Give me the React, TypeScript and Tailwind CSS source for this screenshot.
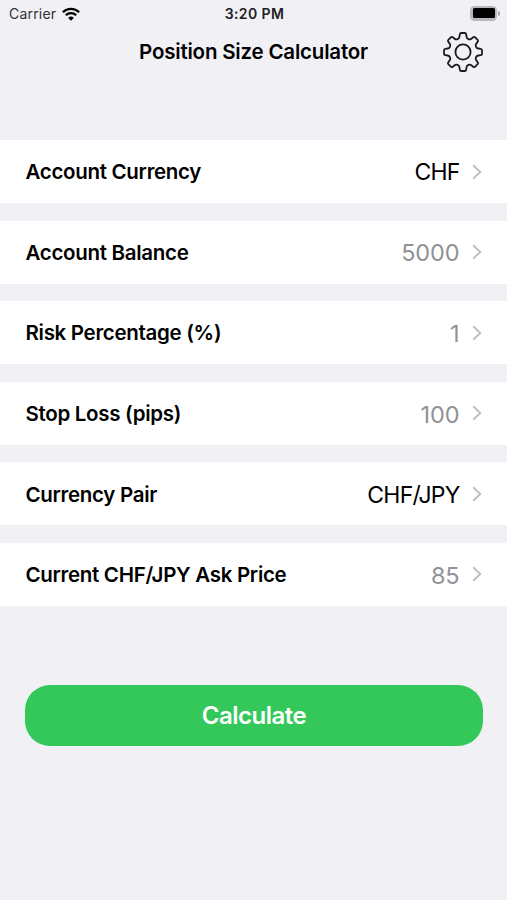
import React from "react";

type Field = { label: string; value: string; muted: boolean };

const fields: Field[] = [
  { label: "Account Currency", value: "CHF", muted: false },
  { label: "Account Balance", value: "5000", muted: true },
  { label: "Risk Percentage (%)", value: "1", muted: true },
  { label: "Stop Loss (pips)", value: "100", muted: true },
  { label: "Currency Pair", value: "CHF/JPY", muted: false },
  { label: "Current CHF/JPY Ask Price", value: "85", muted: true },
];

// Outline of one gear tooth and the valley after it; the gear repeats it eight times.
function gearPath() {
  let d = "";
  for (let i = 0; i < 8; i++) {
    const a = (i * Math.PI) / 4;
    const p = (x: number, y: number) =>
      `${(21 + x * Math.cos(a) - y * Math.sin(a)).toFixed(2)} ${(21 + x * Math.sin(a) + y * Math.cos(a)).toFixed(2)}`;
    d += `${i ? "L" : "M"}${p(-3.2, -17.6)}Q${p(-3, -19)} ${p(-1.7, -19)}L${p(1.7, -19)}Q${p(3, -19)} ${p(3.2, -17.6)}L${p(3.5, -15.3)}C${p(3.8, -13)} ${p(6.5, -11.9)} ${p(8.35, -13.3)}`;
  }
  return d + "Z";
}

function Gear() {
  return (
    <svg viewBox="0 0 42 42" className="size-[42px] fill-none stroke-[#1b1b1d] stroke-[1.8]" strokeLinejoin="round">
      <path d={gearPath()} />
      <circle cx="21" cy="21" r="7.6" />
    </svg>
  );
}

function Wifi() {
  return (
    <svg viewBox="0 0 18 14" className="h-[14px] w-[18px] fill-none stroke-black stroke-[2.3]">
      <path d="M.9 5.2a11.5 11.5 0 0 1 16.2 0M3.8 8.3a7.4 7.4 0 0 1 10.4 0" />
      <path d="M9 13.7 6.2 10.9a4 4 0 0 1 5.6 0Z" className="fill-black stroke-none" />
    </svg>
  );
}

function Battery() {
  return (
    <div className="flex items-center gap-px">
      <div className="h-[15px] w-[27px] rounded-[4.5px] bg-[#b8b8bc] p-[2.5px]">
        <div className="h-full rounded-[1.5px] bg-black" />
      </div>
      <div className="h-[5px] w-[2px] rounded-r-full bg-[#a5a5a9]" />
    </div>
  );
}

function Chevron() {
  return (
    <svg viewBox="0 0 10 16" className="h-4 w-[10px] fill-none stroke-[#c0c0c4] stroke-2">
      <path d="m1.2 1.3 7 6.7-7 6.7" />
    </svg>
  );
}

export default function App() {
  return (
    <main className="h-[900px] w-[507px] overflow-hidden bg-[#f1f0f5] font-['Inter',sans-serif] text-black">
      <div className="grid h-[27px] grid-cols-3 items-center pr-[7px] pl-[9px] text-[14px]">
        <div className="flex items-center gap-[6px] text-[#303033]">
          <span className="tracking-[0.2px]">Carrier</span>
          <Wifi />
        </div>
        <span className="text-center text-[14px] font-semibold tracking-[0.4px] text-[#202022]">3:20 PM</span>
        <div className="flex justify-end pb-px">
          <Battery />
        </div>
      </div>
      <header className="mt-px grid h-12 grid-cols-[1fr_auto_1fr] items-center">
        <h1 className="col-start-2 pt-px text-[20.5px] font-semibold tracking-[-0.2px]">Position Size Calculator</h1>
        <button className="mr-[23px] justify-self-end" aria-label="Settings">
          <Gear />
        </button>
      </header>
      <div className="mt-16 flex flex-col gap-[17.6px]">
        {fields.map((f) => (
          <div key={f.label} className="flex h-[63px] items-center bg-white pr-[25px] pl-[25.5px]">
            <span className="pt-[2px] text-[20.5px] font-semibold tracking-[-0.3px]">{f.label}</span>
            <span className={f.muted ? "ml-auto pt-[2px] text-[23.5px] tracking-[-0.1px] text-[#929296]" : "ml-auto pt-[2px] text-[23px] tracking-[-0.8px]"}>
              {f.value}
            </span>
            <span className="ml-[12.5px]">
              <Chevron />
            </span>
          </div>
        ))}
      </div>
      <button className="mx-[25px] mt-[79px] h-[61px] w-[458px] rounded-[25px] bg-[#34c759] pt-[2px] text-[24px] font-semibold tracking-[-0.5px] text-white">
        Calculate
      </button>
    </main>
  );
}
